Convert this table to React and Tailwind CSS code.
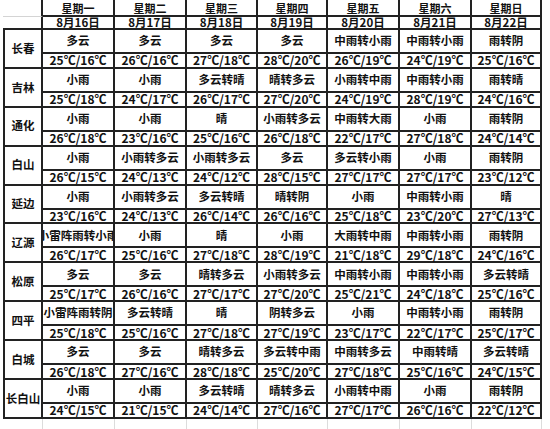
import React from "react";

const days = ["星期一", "星期二", "星期三", "星期四", "星期五", "星期六", "星期日"];
const dates = ["8月16日", "8月17日", "8月18日", "8月19日", "8月20日", "8月21日", "8月22日"];

const rows = [
  ["长春", ["多云", "多云", "多云", "多云", "中雨转小雨", "中雨转小雨", "雨转阴"], ["25/16", "26/16", "27/18", "28/20", "26/19", "24/19", "25/16"]],
  ["吉林", ["小雨", "小雨", "多云转晴", "晴转多云", "小雨转中雨", "中雨转小雨", "雨转晴"], ["25/18", "24/17", "26/17", "27/20", "24/19", "28/19", "24/16"]],
  ["通化", ["小雨", "小雨", "晴", "小雨转多云", "中雨转大雨", "小雨", "雨转阴"], ["26/18", "23/16", "25/16", "26/18", "22/17", "27/18", "24/14"]],
  ["白山", ["小雨", "小雨转多云", "小雨转多云", "多云", "多云转小雨", "小雨", "雨转阴"], ["26/15", "24/13", "24/12", "28/15", "27/17", "27/17", "23/12"]],
  ["延边", ["小雨", "小雨转多云", "多云转晴", "晴转阴", "小雨", "中雨转小雨", "晴"], ["23/16", "24/13", "26/14", "26/16", "25/18", "23/20", "27/13"]],
  ["辽源", ["小雷阵雨转小雨", "小雨", "晴", "小雨", "大雨转中雨", "中雨转小雨", "雨转阴"], ["26/17", "25/16", "27/18", "28/19", "21/18", "29/18", "24/16"]],
  ["松原", ["多云", "多云", "晴转多云", "小雨转多云", "中雨转小雨", "中雨转小雨", "多云转晴"], ["25/17", "26/16", "27/17", "27/20", "25/21", "24/18", "25/16"]],
  ["四平", ["小雷阵雨转阴", "多云转晴", "晴", "阴转多云", "小雨", "中雨转小雨", "雨转阴"], ["25/18", "25/16", "27/18", "27/19", "23/17", "22/17", "25/17"]],
  ["白城", ["多云", "多云", "晴转多云", "多云转中雨", "中雨转多云", "中雨转晴", "多云转晴"], ["26/18", "27/16", "28/18", "25/20", "27/18", "25/16", "24/15"]],
  ["长白山", ["小雨", "小雨", "多云转晴", "晴转多云", "小雨转中雨", "小雨", "雨转阴"], ["24/15", "21/15", "24/14", "27/16", "27/17", "26/16", "22/12"]],
];

const fmt = (t) => {
  const [a, b] = t.split("/");
  return `${a}℃/${b}℃`;
};

const cell = "border-r-2 border-b-2 border-[#222] flex items-center justify-center whitespace-nowrap";

export default function App() {
  return (
    <div
      className="w-[550px] h-[429px] bg-white overflow-hidden text-[#111] font-bold"
      style={{ fontFamily: '"Noto Sans CJK SC", "Noto Sans", sans-serif' }}
    >
      <div className="ml-[3px] grid grid-cols-[40px_72px_72px_71px_70px_72px_72px_70px] grid-rows-[17px_13px_repeat(10,24px_14.9px)] w-[539px]">
        <div className="border-r-2 border-[#222] border-b border-b-[#d4d4d4]" />
        {days.map((d) => (
          <div key={d} className={`${cell} pt-[2px] text-[11px] leading-none`}>{d}</div>
        ))}
        <div className="border-r-2 border-b-2 border-[#222]" />
        {dates.map((d) => (
          <div key={d} className={`${cell} text-[11.5px] leading-none`}>{d}</div>
        ))}
        {rows.map(([city, w, t]) => (
          <React.Fragment key={city}>
            <div className={`${cell} row-span-2 border-l-2 text-[11.5px] leading-none`}>{city}</div>
            {w.map((x, i) => (
              <div
                key={"w" + i}
                className={`${cell} text-[11.5px] leading-none ${x.length > 6 ? "overflow-hidden" : ""}`}
              >
                {x}
              </div>
            ))}
            {t.map((x, i) => (
              <div key={"t" + i} className={`${cell} text-[12px] leading-none`}>{fmt(x)}</div>
            ))}
          </React.Fragment>
        ))}
      </div>
      <div className="ml-[3px] grid grid-cols-[40px_72px_72px_71px_70px_72px_72px_70px] h-[10px] w-[547px]">
        {Array.from({ length: 8 }).map((_, i) => (
          <div key={i} className="border-r border-[#dcdcdc]" />
        ))}
      </div>
    </div>
  );
}
